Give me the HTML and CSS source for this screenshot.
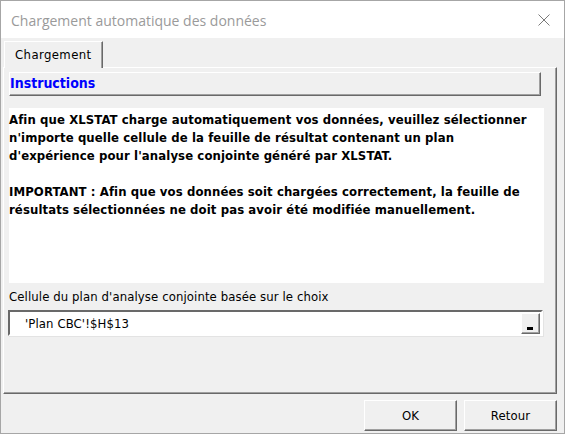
FILE: index.html
```html
<!DOCTYPE html>
<html lang="fr">
<head>
    <meta charset="UTF-8">
    <title>Chargement automatique des données</title>
    <link rel="stylesheet" href="styles.css">
</head>
<body>

<div class="window">
    <div class="titlebar">
        <span class="title">Chargement automatique des données</span>
        <svg class="close" width="12" height="12" viewBox="0 0 12 12">
            <path d="M0.5 0.5 L11.5 11.5 M11.5 0.5 L0.5 11.5" stroke="#7a7a7a" stroke-width="1" fill="none"/>
        </svg>
    </div>
    <div class="client">
        <div class="tabs">
            <div class="tab">Chargement</div>
        </div>
        <div class="page">
            <div class="section-head">Instructions</div>
            <div class="instructions">
                <p>Afin que XLSTAT charge automatiquement vos données, veuillez sélectionner<br>
                n'importe quelle cellule de la feuille de résultat contenant un plan<br>
                d'expérience pour l'analyse conjointe généré par XLSTAT.</p>
                <p>IMPORTANT : Afin que vos données soit chargées correctement, la feuille de<br>
                résultats sélectionnées ne doit pas avoir été modifiée manuellement.</p>
            </div>
            <div class="field-label">Cellule du plan d'analyse conjointe basée sur le choix</div>
            <div class="ref-edit">
                <span class="ref-value">'Plan CBC'!$H$13</span>
                <span class="ref-button"><span class="ref-glyph"></span></span>
            </div>
        </div>
        <div class="footer">
            <button class="btn">OK</button>
            <button class="btn">Retour</button>
        </div>
    </div>
</div>

</body>
</html>
```

FILE: styles.css
```css
body {
    margin: 0;
    background-color: #f0f0f0;
    font-family: "DejaVu Sans Condensed", "DejaVu Sans", sans-serif;
    font-size: 13px;
    letter-spacing: 0.1px;
    color: #000;
}
.window {
    width: 563px;
    height: 432px;
    border: 1px solid #a6a6a6;
    background-color: #f0f0f0;
}
.titlebar {
    height: 37px;
    background-color: white;
    display: flex;
    align-items: center;
    justify-content: space-between;
    padding: 0 14px 0 10px;
}
.title {
    font-family: "Open Sans", sans-serif;
    font-size: 14px;
    letter-spacing: 0;
    color: #9a9a9a;
    margin-top: 1px;
}
.close {
    margin-top: 1px;
}
.client {
    padding: 3px 7px 0 2px;
}
.tabs {
    display: flex;
    padding-left: 1px;
    position: relative;
    z-index: 1;
    margin-bottom: -1px;
}
.tab {
    width: 87px;
    height: 26px;
    line-height: 25px;
    padding-left: 10px;
    letter-spacing: 0.4px;
    background-color: #f0f0f0;
    border-top: 1px solid white;
    border-left: 1px solid white;
    border-right: 1px solid #696969;
    box-shadow: inset -1px 0 0 #a0a0a0;
}
.page {
    height: 321px;
    border-top: 1px solid white;
    border-left: 1px solid white;
    border-right: 1px solid #696969;
    border-bottom: 1px solid #696969;
    box-shadow: inset -1px -1px 0 #a0a0a0;
    padding: 4px 0 0 5px;
}
.section-head {
    width: 530px;
    height: 22px;
    line-height: 21px;
    border-top: 1px solid white;
    border-left: 1px solid white;
    border-right: 1px solid #696969;
    border-bottom: 1px solid #696969;
    box-shadow: inset -1px -1px 0 #a0a0a0;
    color: #0000ff;
    font-weight: bold;
    font-size: 14px;
    letter-spacing: 0;
}
.instructions {
    margin-top: 12px;
    width: 535px;
    height: 175px;
    background-color: white;
    font-weight: bold;
    line-height: 18px;
    white-space: nowrap;
}
.instructions p {
    margin: 0 0 18px 0;
    padding-top: 3px;
}
.instructions p + p {
    padding-top: 0;
}
.field-label {
    margin-top: 5px;
    line-height: 18px;
}
.ref-edit {
    margin-top: 4px;
    margin-left: -1px;
    width: 531px;
    height: 22px;
    display: flex;
    align-items: center;
    justify-content: space-between;
    background-color: white;
    border-top: 2px solid #696969;
    border-left: 2px solid #696969;
    border-right: 2px solid white;
    border-bottom: 2px solid white;
    box-shadow: 1px 1px 0 #e3e3e3;
}
.ref-value {
    padding-left: 15px;
}
.ref-button {
    width: 17px;
    height: 19px;
    margin-right: 1px;
    position: relative;
    background-color: #f0f0f0;
    border-top: 1px solid white;
    border-left: 1px solid white;
    border-right: 1px solid #696969;
    border-bottom: 1px solid #696969;
    box-shadow: inset -1px -1px 0 #a0a0a0;
}
.ref-glyph {
    position: absolute;
    left: 5px;
    top: 13px;
    width: 6px;
    height: 3px;
    background-color: black;
}
.footer {
    display: flex;
    justify-content: flex-end;
    gap: 7px;
    margin-top: 6px;
}
.btn {
    width: 93px;
    height: 31px;
    padding: 0;
    font-family: "DejaVu Sans Condensed", "DejaVu Sans", sans-serif;
    font-size: 13px;
    letter-spacing: 0.1px;
    color: #000;
    background-color: #f0f0f0;
    border-top: 1px solid white;
    border-left: 1px solid white;
    border-right: 1px solid #696969;
    border-bottom: 1px solid #696969;
    box-shadow: inset -1px -1px 0 #a0a0a0;
}
```
